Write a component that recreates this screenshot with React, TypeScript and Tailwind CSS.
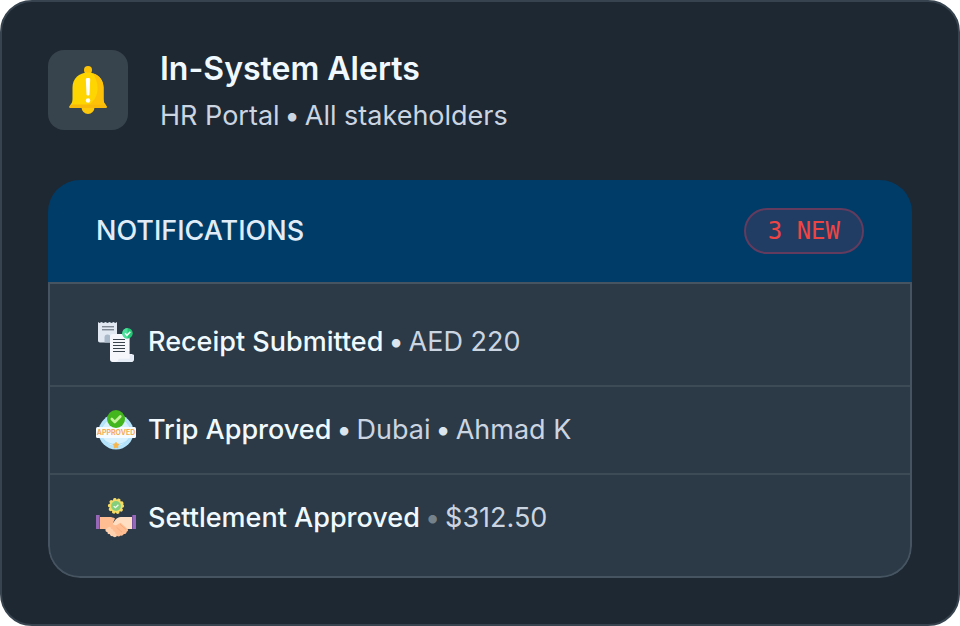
import * as React from 'react';
import { clsx } from 'clsx';

interface Notification {
  title: string;
  details: string[];
  mutedDot?: boolean;
  icon: React.ReactNode;
}

function BellIcon() {
  return (
    <svg viewBox="0 0 48 48" className="h-12 w-12" aria-hidden="true">
      <circle cx="24" cy="41.5" r="6.5" fill="#fdc70a" />
      <circle cx="24" cy="4" r="4" fill="#fcc306" />
      <path
        d="M24 6.5C14.8 6.5 8.5 13 8.5 21.5V33c0 3-1 4.5-2.5 6.5-1 1.3-.8 2.5.6 2.5h34.8c1.4 0 1.6-1.2.6-2.5-1.5-2-2.5-3.5-2.5-6.5V21.5C39.5 13 33.2 6.5 24 6.5z"
        fill="#fed500"
      />
      <path
        d="M29 7.4C32 12 33.5 17 33.5 22c0 6-2 12-8 16.5L7 40c-1 1-.8 2-.4 2h34.8c1.4 0 1.6-1.2.6-2.5-1.5-2-2.5-3.5-2.5-6.5V21.5C39.5 14.5 35.3 9.2 29 7.4z"
        fill="#fdc208"
      />
      <path d="M6 39.5c-1 1.3-.8 2.5.6 2.5h34.8c1.4 0 1.6-1.2.6-2.5l-.8-1.1H7z" fill="#f9b90b" />
      <path
        d="M21.8 13.5c0-1.1.9-1.5 2.2-1.5s2.2.4 2.2 1.5l-.7 14.5c0 1-.6 1.5-1.5 1.5s-1.5-.5-1.5-1.5z"
        fill="#fff"
      />
      <circle cx="24" cy="34.5" r="2.2" fill="#fff" />
    </svg>
  );
}

function ReceiptIcon() {
  return (
    <svg viewBox="0 0 40 40" className="h-10 w-10 shrink-0" aria-hidden="true">
      <path
        d="M2 0l1.5 1L5.5 0l2 1 2-1 2 1 2-1 2 1 2-1 1.700 1L21 0v20.500H4c-1.200 0-2-.8-2-2z"
        fill="#e1e8f2"
      />
      <path d="M8.5 20.5v-5a3 3 0 0 1 6 0v5z" fill="#a9b9c9" />
      <path d="M6 4.8h12M6 7.8h12" stroke="#56616d" strokeWidth="1" />
      <path
        d="M17 12h15c1 0 1.6.7 1.6 1.6V32h2c1 0 1.4 1 2.400.7V37c0 1.800-1 3-2.800 3H16.500c-1.500 0-2.500-1-2.500-2.500V15c0-2 1-3 3-3z"
        fill="#f4f6fc"
      />
      <path d="M33.600 32.500c1.500.3 2.500 1 4 .2V37c0 1.800-1 3-2.800 3H20c1.500-.5 2.300-1.500 2.600-3.200h11z" fill="#e6ecf5" />
      <path d="M17 17.500h12M17 20.500h12M17 23.500h12M17 26.500h12M17 29.500h12" stroke="#39434d" strokeWidth="1.1" />
      <circle cx="31.5" cy="11.2" r="5.2" fill="#23c875" />
      <path d="M31.5 6a5.2 5.2 0 0 0 0 10.4z" fill="#4be29b" />
      <path d="M29 11.3l2 2 3.3-3.6" fill="none" stroke="#f2fff8" strokeWidth="1.5" />
    </svg>
  );
}

function ApprovedIcon() {
  return (
    <svg viewBox="0 0 40 40" className="h-10 w-10 shrink-0" aria-hidden="true">
      <circle cx="20" cy="22" r="17.5" fill="#b6e4fc" />
      <circle cx="20" cy="22" r="14.5" fill="#d7f1ff" stroke="#9bd7f5" strokeWidth=".6" />
      <path d="M7.5 29.5c6 6.5 19 6.5 25 0" fill="none" stroke="#a6dcf6" strokeWidth=".8" />
      <rect y="17" width="40" height="11" rx="1.5" fill="#f6fbff" />
      <text
        x="20"
        y="25"
        textAnchor="middle"
        fontSize="7"
        fontWeight="700"
        fill="#f5ac55"
        className="font-['Inter',sans-serif]"
      >
        APPROVED
      </text>
      <circle cx="20" cy="9" r="9" fill="#43b51d" />
      <path
        d="M15.8 9l3 3 5.5-5.5"
        fill="none"
        stroke="#c5f39b"
        strokeWidth="2.6"
        strokeLinecap="round"
        strokeLinejoin="round"
      />
      <path
        d="M20 32.3l1 1.7 1.9.4-1.3 1.5.2 2-1.8-.8-1.8.8.2-2-1.3-1.5 1.9-.4z"
        fill="#f7b64c"
        stroke="#f7b64c"
      />
    </svg>
  );
}

function HandshakeIcon() {
  return (
    <svg viewBox="0 0 40 40" className="h-10 w-10 shrink-0" aria-hidden="true">
      <circle cx="20" cy="8" r="6.6" fill="#f6dc65" />
      <circle
        cx="20"
        cy="8"
        r="6.4"
        fill="none"
        stroke="#f6dc65"
        strokeWidth="3.4"
        strokeLinecap="round"
        strokeDasharray="0.1 3.92"
      />
      <circle cx="20" cy="8" r="4.9" fill="#85ce7b" />
      <path d="M17.7 8.1l1.7 1.6 3-3" fill="none" stroke="#effff0" strokeWidth="1.3" />
      <path d="M36 19h-9c-3 0-5 .2-7 2l-6 8 14 4 4-2h4z" fill="#ffdec2" />
      <path
        d="M4 19h9c3 0 4.5.5 6 1.5l-2 4.5c-.6 1.8 1.8 3 4 1.7l3.5-2 7 6.3c1 1 .5 2.5-.8 2.7-.2 1.5-1.3 2.500-3 2.300-.5 1.400-1.800 2-3.200 1.500-.9 1.200-2.500 1.300-3.700.3L11 32l-2.500-1H4z"
        fill="#ffbd91"
      />
      <path
        d="M10 31l2.5-2c1.3-.8 3 .5 2.5 2 1.6-.3 2.7.8 2.3 2.3 1.5-.1 2.4 1 2 2.4 1.4 0 2.2 1.7 1.2 2.800-1.200 1.200-3 1-3.500-.4-1.700.6-3.200-.4-3-2-1.600.4-2.800-.6-2.500-2.200-1.700.2-2.700-1.500-1.500-2.900z"
        fill="#ffd1ae"
      />
      <path d="M20.5 29.2l5.5 5M24 26.200l6 5.300" fill="none" stroke="#f4a879" strokeWidth=".8" />
      <path d="M0 17h4v14H0zM36 17h4v14h-4z" fill="#9868b8" />
      <path d="M3 17h1v14H3zM36 17h1v14h-1z" fill="#7951a0" />
    </svg>
  );
}

const NOTIFICATIONS: Notification[] = [
  { title: 'Receipt Submitted', details: ['AED 220'], icon: <ReceiptIcon /> },
  { title: 'Trip Approved', details: ['Dubai', 'Ahmad K'], icon: <ApprovedIcon /> },
  { title: 'Settlement Approved', details: ['$312.50'], mutedDot: true, icon: <HandshakeIcon /> },
];

function NotificationRow({ title, details, mutedDot, icon }: Notification) {
  return (
    <li className="flex items-center gap-3 border-b-2 border-[#3d4b56] px-[46px] py-[23px] last:border-b-0">
      {icon}
      <p className="flex items-center gap-[5px] text-[27px] leading-10 text-[#cbd5e1]">
        <span className="font-medium text-[#f0f9ff]">{title}</span>
        {details.map((detail) => (
          <React.Fragment key={detail}>
            <span className={clsx(mutedDot ? 'text-[#75818b]' : 'text-[#dbe5ef]')}>•</span>
            <span>{detail}</span>
          </React.Fragment>
        ))}
      </p>
    </li>
  );
}

export default function App() {
  return (
    <div className="min-h-screen bg-white font-['Inter',sans-serif]">
      <section className="rounded-[32px] border-2 border-[#37444f] bg-[#1e2833] px-[46px] pt-12 pb-[46px]">
        <header className="flex items-center gap-8">
          <div className="flex h-20 w-20 shrink-0 items-center justify-center rounded-2xl bg-[#37434d]">
            <BellIcon />
          </div>
          <div>
            <h1 className="text-[32px] leading-[38px] font-semibold text-[#f0f9ff]">In-System Alerts</h1>
            <p className="mt-3.5 flex gap-[5px] text-[27px] leading-7 text-[#cbd5e1]">
              <span>HR Portal</span>
              <span>•</span>
              <span>All stakeholders</span>
            </p>
          </div>
        </header>

        <div className="mt-[50px] overflow-hidden rounded-[32px]">
          <div className="flex items-center justify-between bg-[#003c68] px-12 py-7">
            <h2 className="text-[27px] leading-10 font-medium text-[#e0edf8]">NOTIFICATIONS</h2>
            <span className="rounded-full border-2 border-[#633b5e] bg-[#213d63] px-[22px] py-[5px] font-['DejaVu_Sans_Mono',monospace] text-2xl text-[#ef4444]">
              3 NEW
            </span>
          </div>
          <ul className="rounded-b-[32px] border-2 border-[#455460] bg-[#2b3a46] py-[15px]">
            {NOTIFICATIONS.map((item) => (
              <NotificationRow key={item.title} {...item} />
            ))}
          </ul>
        </div>
      </section>
    </div>
  );
}
